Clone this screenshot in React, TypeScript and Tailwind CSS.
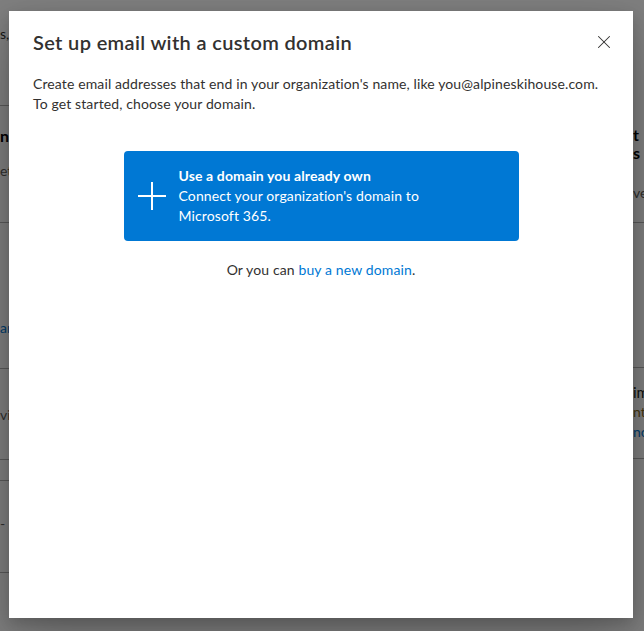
import { X } from "lucide-react";

const font = { fontFamily: "Lato, 'Open Sans', sans-serif" };

function LeftStrip() {
  return (
    <div className="flex w-[120px] flex-col overflow-hidden text-[14px] text-[#323130] whitespace-nowrap">
      <div className="h-[106px] border-b border-[#b3b3b3] pt-[23px]">s, and more</div>
      <div className="h-[117px] border-b border-[#b3b3b3] pt-[18px]">
        <p className="text-[16px] font-bold text-black">nage domains</p>
        <p className="mt-[12px] text-[#605e5c]">et up</p>
      </div>
      <div className="h-[146px] border-b border-[#b3b3b3] pt-[94px] text-[#0078d4]">are</div>
      <div className="h-[91px] border-b border-[#b3b3b3] pt-[35px] text-[#605e5c]">view</div>
      <div className="h-[21px] border-b border-[#b3b3b3]" />
      <div className="h-[92px] border-b border-[#b3b3b3] pt-[32px] text-[#605e5c]">-</div>
    </div>
  );
}

function RightStrip() {
  return (
    <div className="flex w-[120px] flex-col items-start overflow-hidden whitespace-nowrap pl-[109px] text-[14px] text-[#323130]">
      <div className="h-[223px] w-full border-b border-[#b3b3b3] pt-[126px]">
        <p className="text-[16px] leading-[18px] font-bold text-black">t</p>
        <p className="text-[16px] leading-[18px] font-bold text-black">s</p>
        <p className="mt-[20px] text-[#605e5c]">ve</p>
      </div>
      <div className="h-[145px] w-full border-b border-[#b3b3b3]" />
      <div className="h-[91px] w-full border-b border-[#b3b3b3] pt-[14px] leading-[20px]">
        <p className="text-[15px] text-[#201f1e]">im</p>
        <p className="text-[#8a6d1d]">nt</p>
        <p className="text-[#0078d4]">nc</p>
      </div>
    </div>
  );
}

function PlusIcon() {
  return (
    <svg width="30" height="30" viewBox="0 0 30 30" fill="none" stroke="white" strokeWidth="2">
      <line x1="15" y1="1" x2="15" y2="29" />
      <line x1="1" y1="15" x2="29" y2="15" />
    </svg>
  );
}

export default function App() {
  return (
    <div className="relative h-[631px] w-[644px] overflow-hidden bg-white" style={font}>
      <div className="flex h-full justify-between">
        <LeftStrip />
        <RightStrip />
      </div>
      <div className="absolute inset-0 bg-black/50" />
      <div className="absolute left-[9px] top-[11px] flex h-[607px] w-[624px] flex-col bg-white px-6 pt-[15px] shadow-[0_25px_58px_rgba(0,0,0,0.22),0_5px_14px_rgba(0,0,0,0.18)]">
        <div className="flex items-center justify-between">
          <h1 className="text-[20px] leading-[28px] font-semibold tracking-[0.35px] text-[#323130]">
            Set up email with a custom domain
          </h1>
          <button className="mr-[-11px] flex h-8 w-8 items-center justify-center text-[#323130]">
            <X size={22} strokeWidth={1.1} />
          </button>
        </div>
        <p className="mt-4 text-[14px] leading-[20px] tracking-[0.12px] text-[#323130]">
          Create email addresses that end in your organization's name, like you@alpineskihouse.com.
          <br />
          To get started, choose your domain.
        </p>
        <button className="mx-auto mt-[37px] flex h-[90px] w-[395px] items-center gap-[12px] rounded-[4px] bg-[#0078d4] pl-[13px] text-left text-[14px] leading-[20px] tracking-[0.12px] text-white">
          <PlusIcon />
          <span>
            <span className="block font-bold">Use a domain you already own</span>
            <span className="block">Connect your organization's domain to</span>
            <span className="block">Microsoft 365.</span>
          </span>
        </button>
        <p className="mt-[19px] text-center text-[14px] leading-[20px] tracking-[0.12px] text-[#323130]">
          Or you can <a className="text-[#0078d4]">buy a new domain</a>.
        </p>
      </div>
    </div>
  );
}
